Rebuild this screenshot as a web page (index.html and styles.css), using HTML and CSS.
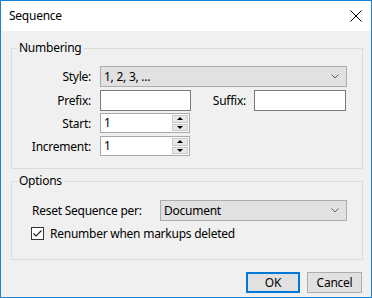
FILE: index.html
```html
<!DOCTYPE html>
<html lang="en">
  <head>
    <meta charset="UTF-8" />
    <meta name="viewport" content="width=device-width, initial-scale=1.0" />
    <title>Sequence</title>
    <link rel="stylesheet" href="styles.css">
  </head>
  <body>
    <div class="window">
      <div class="titlebar">
        <span class="title">Sequence</span>
        <svg class="close" width="12" height="12" viewBox="0 0 12 12">
          <path d="M0.5 0.5 L11.5 11.5 M11.5 0.5 L0.5 11.5" stroke="#000" stroke-width="1" fill="none" />
        </svg>
      </div>

      <div class="content">
        <!-- Numbering -->
        <div class="group numbering">
          <span class="group-title">Numbering</span>
          <div class="row row-style">
            <label class="lbl">Style:</label>
            <div class="combo combo-style">
              <span>1, 2, 3, ...</span>
              <svg class="chev" width="8" height="5" viewBox="0 0 8 5">
                <path d="M0.5 0.5 L4 4 L7.5 0.5" stroke="#606060" fill="none" />
              </svg>
            </div>
          </div>
          <div class="row row-prefix">
            <label class="lbl">Prefix:</label>
            <div class="textbox"></div>
            <label class="lbl-suffix">Suffix:</label>
            <div class="textbox textbox-suffix"></div>
          </div>
          <div class="row row-start">
            <label class="lbl">Start:</label>
            <div class="spinner">
              <span class="spin-value">1</span>
              <div class="spin-btns">
                <span class="spin-btn"><i class="tri-up"></i></span>
                <span class="spin-btn"><i class="tri-down"></i></span>
              </div>
            </div>
          </div>
          <div class="row row-incr">
            <label class="lbl">Increment:</label>
            <div class="spinner">
              <span class="spin-value">1</span>
              <div class="spin-btns">
                <span class="spin-btn"><i class="tri-up"></i></span>
                <span class="spin-btn"><i class="tri-down"></i></span>
              </div>
            </div>
          </div>
        </div>

        <!-- Options -->
        <div class="group options">
          <span class="group-title">Options</span>
          <div class="row row-reset">
            <label class="lbl-reset">Reset Sequence per:</label>
            <div class="combo combo-reset">
              <span>Document</span>
              <svg class="chev" width="8" height="5" viewBox="0 0 8 5">
                <path d="M0.5 0.5 L4 4 L7.5 0.5" stroke="#606060" fill="none" />
              </svg>
            </div>
          </div>
          <div class="row row-check">
            <span class="checkbox">
              <svg width="11" height="11" viewBox="0 0 11 11">
                <path d="M1.5 5.5 L4 8 L9.5 2.5" stroke="#222" stroke-width="1.2" fill="none" />
              </svg>
            </span>
            <label>Renumber when markups deleted</label>
          </div>
        </div>

        <div class="buttons">
          <button class="btn btn-ok">OK</button>
          <button class="btn">Cancel</button>
        </div>
      </div>
    </div>
  </body>
</html>
```

FILE: styles.css
```css
body {
  margin: 0;
  font-family: "Noto Sans", sans-serif;
  font-size: 12px;
  letter-spacing: -0.25px;
  color: #000;
}
.window {
  width: 370px;
  height: 296px;
  border: 1px solid #1883d7;
  background: #f0f0f0;
  display: flex;
  flex-direction: column;
}
.titlebar {
  height: 30px;
  background: #fff;
  display: flex;
  align-items: center;
  justify-content: space-between;
  padding: 0 8px 0 8px;
}
.title {
  font-size: 12px;
  margin-top: -1px;
}
.close {
  margin-right: 1px;
}
.content {
  flex: 1;
  display: flex;
  flex-direction: column;
}
.group {
  border: 1px solid #dcdcdc;
  margin: 17px 8px 0 10px;
  display: flex;
  flex-direction: column;
}
.group-title {
  align-self: flex-start;
  margin: -9px 0 0 5px;
  padding: 0 2px;
  line-height: 16px;
  background: #f0f0f0;
}
.numbering {
  padding-bottom: 12px;
}
.options {
  margin-top: 12px;
  padding-bottom: 17px;
}
.row {
  display: flex;
  align-items: center;
}
.lbl {
  width: 79px;
  text-align: right;
  margin-right: 9px;
}
.row-style {
  margin-top: 10px;
}
.row-prefix {
  margin-top: 3px;
}
.row-start {
  margin-top: 2px;
}
.row-incr {
  margin-top: 3px;
}
.combo {
  height: 19px;
  border: 1px solid #adadad;
  background: #e1e1e1;
  display: flex;
  align-items: center;
  justify-content: space-between;
  padding: 0 7px 0 3px;
  box-sizing: content-box;
}
.combo-style {
  width: 235px;
}
.combo-reset {
  width: 175px;
}
.textbox {
  width: 89px;
  height: 19px;
  border: 1px solid #7a7a7a;
  background: #fff;
}
.textbox-suffix {
  width: 90px;
}
.lbl-suffix {
  width: 55px;
  text-align: right;
  margin-right: 8px;
}
.spinner {
  width: 88px;
  height: 18px;
  border: 1px solid #a9a9a9;
  background: #fff;
  display: flex;
  justify-content: space-between;
  align-items: stretch;
}
.spin-value {
  padding-left: 3px;
  line-height: 18px;
}
.spin-btns {
  width: 16px;
  display: flex;
  flex-direction: column;
  padding: 1px 1px 1px 0;
  gap: 1px;
}
.spin-btn {
  flex: 1;
  background: #e8e8e8;
  border: 1px solid #c8c8c8;
  display: flex;
  align-items: center;
  justify-content: center;
}
.tri-up {
  width: 0;
  height: 0;
  border-left: 3px solid transparent;
  border-right: 3px solid transparent;
  border-bottom: 3px solid #000;
}
.tri-down {
  width: 0;
  height: 0;
  border-left: 3px solid transparent;
  border-right: 3px solid transparent;
  border-top: 3px solid #000;
}
.row-reset {
  margin-top: 11px;
  padding-left: 20px;
}
.lbl-reset {
  width: 128px;
}
.row-check {
  margin-top: 4px;
  padding-left: 19px;
}
.checkbox {
  width: 11px;
  height: 11px;
  border: 1px solid #333;
  background: #fff;
  margin-right: 6px;
  display: flex;
}
.buttons {
  display: flex;
  justify-content: flex-end;
  gap: 7px;
  margin: 12px 9px 0 0;
}
.btn {
  font-family: "Noto Sans", sans-serif;
  font-size: 12px;
  letter-spacing: -0.25px;
  height: 21px;
  width: 55px;
  padding: 0;
  background: #e1e1e1;
  border: 1px solid #adadad;
  color: #000;
}
.btn-ok {
  width: 54px;
  border: 2px solid #0078d7;
}
```
